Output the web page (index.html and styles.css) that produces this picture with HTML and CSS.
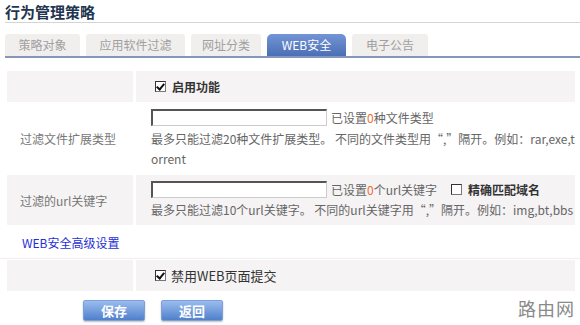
FILE: index.html
```html
<!DOCTYPE html>
<html lang="zh-CN">
<head>
    <meta charset="UTF-8">
    <title>行为管理策略</title>
    <link rel="stylesheet" href="styles.css">
</head>
<body>
    <h1 class="page-title">行为管理策略</h1>

    <ul class="tabs">
        <li class="tab" style="width:75px">策略对象</li>
        <li class="tab" style="width:99px">应用软件过滤</li>
        <li class="tab" style="width:70px">网址分类</li>
        <li class="tab active" style="width:79px">WEB安全</li>
        <li class="tab" style="width:76px">电子公告</li>
    </ul>

    <table class="form-table">
        <tr class="row-gray row-enable">
            <td class="label-cell"></td>
            <td class="value-cell">
                <label class="check bold"><span class="box checked"></span>启用功能</label>
            </td>
        </tr>
        <tr class="row-white row-ext">
            <td class="label-cell">过滤文件扩展类型</td>
            <td class="value-cell">
                <div class="input-line">
                    <input type="text" class="text-input">
                    <span class="count">已设置<em>0</em>种文件类型</span>
                </div>
                <p class="hint">最多只能过滤20种文件扩展类型。 不同的文件类型用“,”隔开。例如：rar,exe,torrent</p>
            </td>
        </tr>
        <tr class="row-gray row-url">
            <td class="label-cell">过滤的url关键字</td>
            <td class="value-cell">
                <div class="input-line">
                    <input type="text" class="text-input">
                    <span class="count">已设置<em>0</em>个url关键字</span>
                    <label class="check bold match"><span class="box"></span>精确匹配域名</label>
                </div>
                <p class="hint">最多只能过滤10个url关键字。 不同的url关键字用“,”隔开。例如：img,bt,bbs</p>
            </td>
        </tr>
    </table>

    <div class="adv-link"><a href="#">WEB安全高级设置</a></div>

    <table class="form-table bottom-table">
        <tr class="row-gray row-submit">
            <td class="label-cell"></td>
            <td class="value-cell">
                <label class="check submit-check"><span class="box checked"></span>禁用WEB页面提交</label>
            </td>
        </tr>
    </table>

    <div class="actions">
        <button class="btn">保存</button>
        <button class="btn">返回</button>
    </div>

    <div class="watermark">路由网</div>
</body>
</html>
```

FILE: styles.css
```css
* {
    box-sizing: border-box;
    margin: 0;
    padding: 0;
}

body {
    position: relative;
    width: 580px;
    height: 325px;
    background: #fff;
    font-family: "Noto Sans CJK SC", "Liberation Sans", sans-serif;
    font-size: 12px;
    color: #666;
    overflow: hidden;
}

.page-title {
    margin: 0 0 0 5px;
    padding-top: 2px;
    height: 23px;
    font-size: 15px;
    line-height: 20px;
    font-weight: bold;
    color: #1f3550;
    border-bottom: 1px solid #d4d4d4;
}

.tabs {
    list-style: none;
    display: flex;
    gap: 6px;
    margin: 11px 0 0 5px;
    height: 24px;
    border-bottom: 2px solid #8496bb;
}

.tab {
    height: 22px;
    line-height: 22px;
    text-align: center;
    background: #f1eeee;
    color: #a0a0a0;
    border-radius: 3px 3px 0 0;
}

.tab.active {
    background: linear-gradient(#7395d6, #4b6fb6);
    color: #fff;
    border-radius: 5px 5px 0 0;
}

.form-table {
    width: 574px;
    margin: 10px 0 0 4px;
    border-collapse: separate;
    border-spacing: 3px;
}

.label-cell {
    width: 126px;
    padding-left: 13px;
    color: #777;
    vertical-align: middle;
}

.value-cell {
    padding-left: 15px;
    vertical-align: middle;
}

.row-gray td {
    background: #f5f3f4;
}

.row-enable td {
    height: 31px;
}

.row-ext td {
    height: 67px;
}

.row-url td {
    height: 50px;
}

.check {
    display: flex;
    align-items: center;
    gap: 6px;
    color: #333;
    padding-left: 4px;
}

.bold {
    font-weight: bold;
}

.box {
    display: inline-block;
    width: 11px;
    height: 11px;
    border: 1px solid #777;
    border-top-color: #333;
    border-left-color: #333;
    background: #fff;
    position: relative;
}

.box.checked::after {
    content: "";
    position: absolute;
    left: 2px;
    top: 0px;
    width: 3px;
    height: 6px;
    border: solid #111;
    border-width: 0 2px 2px 0;
    transform: rotate(40deg);
}

.input-line {
    display: flex;
    align-items: center;
    height: 18px;
}

.text-input {
    width: 176px;
    height: 17px;
    border: 1px solid #ccc;
    border-top: 2px solid #555;
    border-left: 2px solid #555;
    margin-right: 4px;
}

.count em {
    font-style: normal;
    color: #f06d2e;
}

.match {
    margin-left: 10px;
}

.hint {
    margin-top: 2px;
    line-height: 20px;
    word-break: break-all;
}

.adv-link {
    height: 31px;
    padding: 6px 0 0 22px;
    border-bottom: 1px solid #efefef;
}

.adv-link a {
    color: #1e2fd8;
    text-decoration: none;
}

.bottom-table {
    margin-top: -2px;
}

.row-submit td {
    height: 31px;
}

.submit-check {
    font-size: 13px;
    gap: 5px;
}

.actions {
    display: flex;
    gap: 16px;
    margin: 6px 0 0 83px;
}

.btn {
    width: 62px;
    height: 21px;
    border: 1px solid #7d9fd6;
    border-radius: 2px;
    background: linear-gradient(#9bbdee, #4f80cc);
    color: #fff;
    font-family: inherit;
    font-weight: bold;
    font-size: 13px;
    box-shadow: 0 1px 2px rgba(0, 0, 0, 0.25);
}

.watermark {
    position: absolute;
    right: 5px;
    bottom: 4px;
    font-size: 18px;
    color: #8a8a8a;
    letter-spacing: 1px;
}
```
